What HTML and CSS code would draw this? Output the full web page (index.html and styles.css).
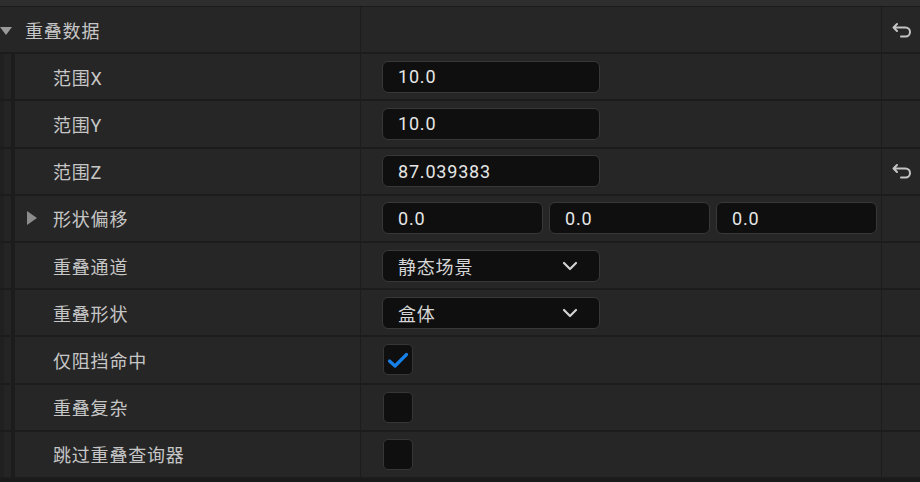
FILE: index.html
```html
<!DOCTYPE html>
<html lang="zh-CN">
<head>
    <meta charset="UTF-8">
    <title>重叠数据</title>
    <link rel="stylesheet" href="styles.css">
</head>
<body>
    <div class="top-strip"></div>
    <div class="panel">
        <div class="row header">
            <div class="name">
                <span class="arrow-down"></span>
                <span>重叠数据</span>
            </div>
            <div class="value"></div>
            <div class="reset">
                <svg viewBox="0 0 22 16" width="22" height="16"><path d="M6 2 L2.5 5.5 L6 9 M3 5.5 H14.5 A4.5 4.5 0 0 1 14.5 14.5 H10" fill="none" stroke="#c4c4c4" stroke-width="2" stroke-linecap="round" stroke-linejoin="round"/></svg>
            </div>
        </div>

        <div class="row">
            <div class="gutter"></div>
            <div class="name">范围X</div>
            <div class="value"><div class="field">10.0</div></div>
            <div class="reset"></div>
        </div>

        <div class="row">
            <div class="gutter"></div>
            <div class="name">范围Y</div>
            <div class="value"><div class="field">10.0</div></div>
            <div class="reset"></div>
        </div>

        <div class="row">
            <div class="gutter"></div>
            <div class="name">范围Z</div>
            <div class="value"><div class="field">87.039383</div></div>
            <div class="reset">
                <svg viewBox="0 0 22 16" width="22" height="16"><path d="M6 2 L2.5 5.5 L6 9 M3 5.5 H14.5 A4.5 4.5 0 0 1 14.5 14.5 H10" fill="none" stroke="#c4c4c4" stroke-width="2" stroke-linecap="round" stroke-linejoin="round"/></svg>
            </div>
        </div>

        <div class="row">
            <div class="gutter"></div>
            <div class="name expandable">
                <span class="arrow-right"></span>
                <span>形状偏移</span>
            </div>
            <div class="value vector">
                <div class="field">0.0</div>
                <div class="field">0.0</div>
                <div class="field">0.0</div>
            </div>
            <div class="reset"></div>
        </div>

        <div class="row">
            <div class="gutter"></div>
            <div class="name">重叠通道</div>
            <div class="value">
                <div class="field combo">
                    <span>静态场景</span>
                    <svg viewBox="0 0 16 10" width="16" height="10"><path d="M2 2 L8 8 L14 2" fill="none" stroke="#d2d2d2" stroke-width="2.2" stroke-linecap="round" stroke-linejoin="round"/></svg>
                </div>
            </div>
            <div class="reset"></div>
        </div>

        <div class="row">
            <div class="gutter"></div>
            <div class="name">重叠形状</div>
            <div class="value">
                <div class="field combo">
                    <span>盒体</span>
                    <svg viewBox="0 0 16 10" width="16" height="10"><path d="M2 2 L8 8 L14 2" fill="none" stroke="#d2d2d2" stroke-width="2.2" stroke-linecap="round" stroke-linejoin="round"/></svg>
                </div>
            </div>
            <div class="reset"></div>
        </div>

        <div class="row">
            <div class="gutter"></div>
            <div class="name">仅阻挡命中</div>
            <div class="value">
                <div class="check">
                    <svg viewBox="0 0 24 24" width="24" height="24"><path d="M3.5 13 L9 18 L20.5 6.5" fill="none" stroke="#1780e8" stroke-width="3.2" stroke-linecap="round" stroke-linejoin="round"/></svg>
                </div>
            </div>
            <div class="reset"></div>
        </div>

        <div class="row">
            <div class="gutter"></div>
            <div class="name">重叠复杂</div>
            <div class="value"><div class="check"></div></div>
            <div class="reset"></div>
        </div>

        <div class="row">
            <div class="gutter"></div>
            <div class="name">跳过重叠查询器</div>
            <div class="value"><div class="check"></div></div>
            <div class="reset"></div>
        </div>
    </div>
</body>
</html>
```

FILE: styles.css
```css
body {
    margin: 0;
    background-color: #1a1a1a;
    font-family: Roboto, "Noto Sans CJK SC", sans-serif;
    font-size: 18px;
    letter-spacing: 0.8px;
    color: #c6c6c6;
    width: 920px;
    height: 482px;
    overflow: hidden;
}

.top-strip {
    height: 6px;
    background-color: #2e2e2e;
    border-bottom: 1px solid #1b1b1b;
}

.row {
    display: grid;
    grid-template-columns: 15px 345px 521px 38px;
    height: 45.2px;
    border-bottom: 2px solid #1c1c1c;
    background-color: #262626;
}

.row.header {
    grid-template-columns: 360px 521px 38px;
}

.gutter {
    background: linear-gradient(to right, #202020 0, #202020 4px, #242424 4px, #242424 11px, #1c1c1c 11px, #1c1c1c 15px);
}

.name {
    display: flex;
    align-items: center;
    padding-left: 38px;
}

.header .name {
    padding-left: 0;
}

.arrow-down {
    width: 0;
    height: 0;
    border-left: 6px solid transparent;
    border-right: 6px solid transparent;
    border-top: 8px solid #9a9a9a;
    margin: 2px 13px 0 0;
}

.name.expandable {
    padding-left: 12px;
}

.arrow-right {
    width: 0;
    height: 0;
    border-top: 7px solid transparent;
    border-bottom: 7px solid transparent;
    border-left: 10px solid #8c8c8c;
    margin-right: 16px;
}

.value {
    border-left: 1px solid #1c1c1c;
    display: flex;
    align-items: center;
    padding-left: 21px;
}

.value.vector {
    gap: 6px;
    padding-right: 4px;
}

.value.vector .field {
    flex: 1;
    width: auto;
}

.field {
    box-sizing: border-box;
    width: 218px;
    height: 32px;
    background-color: #0f0f0f;
    border: 1px solid #383838;
    border-radius: 6px;
    padding-left: 15px;
    display: flex;
    align-items: center;
    color: #e6e6e6;
}

.field.combo {
    justify-content: space-between;
    padding-right: 21px;
    color: #d6d6d6;
}

.check {
    box-sizing: border-box;
    width: 30px;
    height: 31px;
    margin-left: 1px;
    background-color: #0f0f0f;
    border: 1px solid #363636;
    border-radius: 5px;
    display: flex;
    align-items: center;
    justify-content: center;
}

.reset {
    border-left: 1px solid #1c1c1c;
    display: flex;
    align-items: center;
    justify-content: center;
    padding-left: 3px;
}
```
